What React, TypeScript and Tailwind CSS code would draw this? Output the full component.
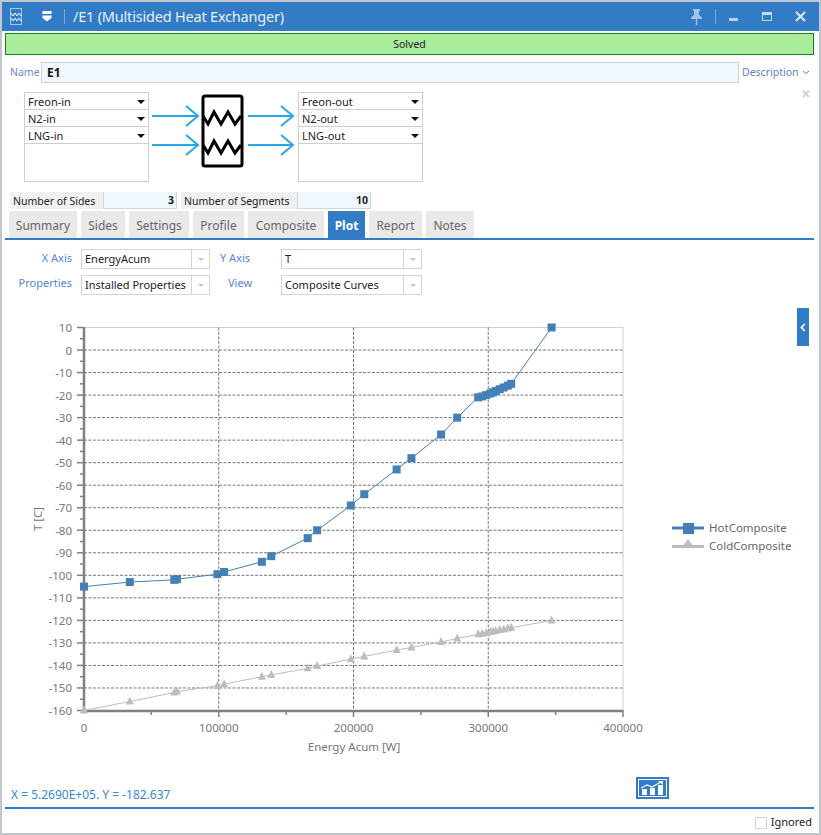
const hot: [number, number][] = [
  [0, -105], [34000, -103], [67000, -102], [69000, -101.7], [99000, -99.5], [104000, -98.5],
  [132000, -94], [139000, -91.5], [166000, -83.5], [173000, -80], [198000, -69], [208000, -64],
  [232000, -53], [243000, -48], [265000, -37.5], [277000, -30], [292500, -21], [295500, -20.6],
  [298500, -20], [301500, -19.3], [303500, -18.8], [305500, -18.2], [308500, -17.4], [311500, -16.6],
  [314500, -15.8], [317000, -15], [347000, 10],
];

const cold: [number, number][] = [
  [0, -160], [34000, -156], [67000, -152], [69000, -151.6], [99000, -149], [104000, -148.3],
  [132000, -145], [139000, -144.2], [166000, -141.3], [173000, -140.3], [198000, -137.2], [208000, -136],
  [232000, -133.2], [243000, -132], [265000, -129.6], [277000, -128], [292500, -126.2], [295500, -125.9],
  [298500, -125.6], [301500, -125.2], [303500, -124.9], [305500, -124.7], [308500, -124.3], [311500, -124],
  [314500, -123.6], [317000, -123.3], [347000, -120],
];

const px = (x: number) => 84 + (x / 400000) * 539;
const py = (y: number) => 327.5 + ((10 - y) / 170) * 383;
const line = (d: [number, number][]) => d.map((p) => `${px(p[0]).toFixed(1)},${py(p[1]).toFixed(1)}`).join(" ");

const yTicks = [10, 0, -10, -20, -30, -40, -50, -60, -70, -80, -90, -100, -110, -120, -130, -140, -150, -160];
const xTicks = [0, 100000, 200000, 300000, 400000];
const tabs = ["Summary", "Sides", "Settings", "Profile", "Composite", "Plot", "Report", "Notes"];
const tabWidths = ["w-[68px]", "w-[44px]", "w-[60px]", "w-[51px]", "w-[76px]", "w-[37px]", "w-[53px]", "w-[48px]"];

function Chart() {
  return (
    <svg className="block" width="817" height="465" viewBox="2 300 817 465" fontFamily="'Noto Sans', sans-serif">
      <line x1="84" x2="623" y1={327.5} y2={327.5} stroke="#cfcfcf" />
      <line x1="623" x2="623" y1={327.5} y2={710} stroke="#cfcfcf" />
      {yTicks.slice(1, -1).map((t) => (
        <line key={t} x1="84" x2="623" y1={py(t)} y2={py(t)} stroke="#777" strokeDasharray="3 1.5" />
      ))}
      {[100000, 200000, 300000].map((t) => (
        <line key={t} x1={px(t)} x2={px(t)} y1="327.5" y2="710" stroke="#777" strokeDasharray="3 1.5" />
      ))}
      {yTicks.map((t) => (
        <g key={t}>
          <line x1="77" x2="84" y1={py(t)} y2={py(t)} stroke="#808080" strokeWidth="1.5" />
          {t > -160 && <line x1="80" x2="84" y1={py(t - 5)} y2={py(t - 5)} stroke="#808080" strokeWidth="1.5" />}
          <text x="72" y={py(t) + 4.5} textAnchor="end" fontSize="11.5" fill="#777">{t}</text>
        </g>
      ))}
      {[50000, 100000, 150000, 200000, 250000, 300000, 350000, 400000].map((t) => (
        <line key={t} x1={px(t)} x2={px(t)} y1="710" y2={t % 100000 === 0 ? 717 : 715} stroke="#808080" strokeWidth="1.5" />
      ))}
      <line x1="84" x2="84" y1="327" y2="712" stroke="#808080" strokeWidth="2.5" />
      <line x1="83" x2="623" y1="711" y2="711" stroke="#808080" strokeWidth="2.5" />
      {xTicks.map((t) => (
        <text key={t} x={px(t)} y="732" textAnchor="middle" fontSize="11.5" fill="#777">{t}</text>
      ))}
      <text x="354" y="751" textAnchor="middle" fontSize="11.5" fill="#777">Energy Acum [W]</text>
      <text transform="translate(42 519) rotate(-90)" textAnchor="middle" fontSize="11.5" fill="#777">T [C]</text>

      <polyline points={line(cold)} fill="none" stroke="#bdbdbd" />
      {cold.map((p, i) => (
        <polygon
          key={i}
          transform={`translate(${px(p[0])} ${py(p[1])})`}
          points="0,-5 4,3 -4,3"
          fill="#bdbdbd"
        />
      ))}
      <polyline points={line(hot)} fill="none" stroke="#4480b5" />
      {hot.map((p, i) => (
        <rect key={i} x={px(p[0]) - 4} y={py(p[1]) - 4} width="8" height="8" fill="#4480b5" />
      ))}

      <line x1="672" x2="704" y1="528" y2="528" stroke="#4480b5" strokeWidth="3" />
      <rect x="683" y="523" width="11" height="11" fill="#4480b5" />
      <text x="709" y="532" fontSize="11.5" fill="#666">HotComposite</text>
      <line x1="672" x2="704" y1="546.5" y2="546.5" stroke="#bdbdbd" strokeWidth="3" />
      <polygon points="688,539 694,547 682,547" fill="#bdbdbd" />
      <text x="709" y="550" fontSize="11.5" fill="#666">ColdComposite</text>
    </svg>
  );
}

function StreamBox({ names }: { names: string[] }) {
  return (
    <div className="w-[125px] h-[90px] border border-[#cfcfcf] bg-white">
      {names.map((n) => (
        <div key={n} className="h-[17px] flex items-center justify-between pl-[3px] pr-[2px] pt-[2px] border-b border-[#cfcfcf] text-[11px] text-[#222]">
          <span>{n}</span>
          <span className="w-0 h-0 border-x-[4px] border-x-transparent border-t-[4px] border-t-[#111] mr-[1px]" />
        </div>
      ))}
    </div>
  );
}

function Diagram() {
  return (
    <svg width="149" height="90" viewBox="149 92 149 90" className="block shrink-0">
      <rect x="203" y="96" width="39" height="70" rx="2" fill="none" stroke="#000" strokeWidth="3" />
      <polyline points="203,116 208,124 214,112 221,124 228,112 235,124 241,116" fill="none" stroke="#000" strokeWidth="3" />
      <polyline points="203,145 208,153 214,141 221,153 228,141 235,153 241,145" fill="none" stroke="#000" strokeWidth="3" />
      {[116, 145].map((y) => (
        <g key={y} fill="none" stroke="#2aa7e2" strokeWidth="2">
          <line x1="152" x2="198" y1={y} y2={y} />
          <polyline points={`186,${y - 10} 198,${y} 186,${y + 10}`} />
          <line x1="248" x2="293" y1={y} y2={y} />
          <polyline points={`281,${y - 10} 293,${y} 281,${y + 10}`} />
        </g>
      ))}
    </svg>
  );
}

function Select({ value, width }: { value: string; width: string }) {
  return (
    <div className={`${width} h-[20px] border border-[#d4d4d4] flex items-center justify-between bg-white`}>
      <span className="pl-[3px] text-[11px] text-[#222] whitespace-nowrap">{value}</span>
      <span className="w-[18px] h-full shrink-0 border-l border-[#d4d4d4] flex items-center justify-center">
        <span className="w-0 h-0 border-x-[3px] border-x-transparent border-t-[3px] border-t-[#c4c4c4]" />
      </span>
    </div>
  );
}

export default function App() {
  return (
    <div
      className="relative w-[821px] h-[835px] bg-white border-x-[2px] border-t-[2px] border-b-[2px] border-[#c2c5c9] overflow-hidden flex flex-col"
      style={{ fontFamily: "'Noto Sans', sans-serif" }}
    >
      {/* title bar */}
      <div className="h-[29px] shrink-0 bg-[#327bc5] flex items-center text-white">
        <svg width="12" height="17" viewBox="0 0 12 17" className="ml-[8px] shrink-0">
          <rect x="0.5" y="0.5" width="11" height="16" fill="none" stroke="#a9c8e8" />
          <polyline points="1,5 3,8 5,5 7,8 9,5 11,8" fill="none" stroke="#fff" />
          <polyline points="1,10 3,13 5,10 7,13 9,10 11,13" fill="none" stroke="#fff" />
        </svg>
        <svg width="10" height="11" viewBox="0 0 10 11" className="ml-[20px] shrink-0">
          <rect x="0.5" y="0" width="9" height="3" fill="#fff" />
          <polygon points="0.5,4.5 9.5,4.5 9.5,7 5,10.5 0.5,7" fill="#fff" />
        </svg>
        <div className="ml-[12px] w-px h-[15px] bg-[#79a8d8]" />
        <div className="ml-[8px] text-[14.5px] tracking-[-0.2px] text-[#e8f0fa] whitespace-nowrap">/E1 (Multisided Heat Exchanger)</div>
        <svg width="13" height="16" viewBox="0 0 13 16" className="ml-auto shrink-0">
          <path d="M3 0h7v1.5l-1 .5v4l3 2.5V10H1V8.500l3-2.500V2L3 1.500zM5.800 10h1.400v6H5.800z" fill="#a3c4e6" />
        </svg>
        <div className="ml-[12px] w-px h-[15px] bg-[#79a8d8]" />
        <div className="ml-[13px] w-[9px] h-[3px] bg-[#b9d2ec] mt-[6px]" />
        <div className="ml-[24px] w-[10px] h-[9px] border border-t-[3px] border-[#c5daf0]" />
        <svg width="11" height="11" viewBox="0 0 11 11" className="ml-[23px] mr-[13px] shrink-0">
          <path d="M1 1l9 9M10 1l-9 9" stroke="#dbe8f6" strokeWidth="2" />
        </svg>
      </div>

      <div className="ml-[3px] mr-[5px] mt-[2px] h-[22px] pt-[2px] shrink-0 bg-[#a8ec9c] border border-[#1f7a1f] flex items-center justify-center text-[10.5px] text-[#222]">
        Solved
      </div>

      {/* name row */}
      <div className="mt-[7px] h-[21px] shrink-0 flex items-center">
        <span className="ml-[8px] w-[31px] text-[10.5px] text-[#6f86c9]">Name</span>
        <div className="w-[698px] h-[21px] bg-[#f0f7fd] border border-[#cfd2d6] pl-[5px] flex items-center text-[12px] font-bold text-[#111]">E1</div>
        <span className="ml-[3px] text-[10.5px] text-[#5f80c8]">Description</span>
        <svg width="8" height="5" viewBox="0 0 8 5" className="ml-[3px]">
          <path d="M1 1l3 2.500L7 1" fill="none" stroke="#5f80c8" />
        </svg>
      </div>

      {/* stream connections */}
      <div className="mt-[9px] h-[90px] shrink-0 flex">
        <div className="ml-[22px]" />
        <StreamBox names={["Freon-in", "N2-in", "LNG-in"]} />
        <Diagram />
        <StreamBox names={["Freon-out", "N2-out", "LNG-out"]} />
        <svg width="8" height="8" viewBox="0 0 8 8" className="ml-[379px] shrink-0 mt-[-2px]">
          <path d="M1 1l6 6M7 1l-6 6" stroke="#d2d2d2" strokeWidth="2" />
        </svg>
      </div>

      {/* counts */}
      <div className="mt-[10px] h-[17px] shrink-0 flex text-[10.5px] text-[#222] ml-[8px]">
        <div className="w-[94px] bg-[#f0f0f0] pl-[3px] pt-[2px] flex items-center border-r border-[#d4d4d4]">Number of Sides</div>
        <div className="w-[73px] bg-[#f0f7fd] pr-[2px] pt-[2px] flex items-center justify-end font-bold border-b border-r border-[#d4d4d4]">3</div>
        <div className="ml-[4px] w-[117px] bg-[#f0f0f0] pl-[3px] pt-[2px] flex items-center border-r border-[#d4d4d4]">Number of Segments</div>
        <div className="w-[73px] bg-[#f0f7fd] pr-[2px] pt-[2px] flex items-center justify-end font-bold border-b border-r border-[#d4d4d4]">10</div>
      </div>

      {/* tabs */}
      <div className="mt-[2px] ml-[3px] mr-[5px] h-[29px] shrink-0 flex gap-[4px] pl-[4px] border-b-2 border-[#327bc5]">
        {tabs.map((t, i) =>
          t === "Plot" ? (
            <div key={t} className={`${tabWidths[i]} h-[27px] pt-[2px] bg-[#327bc5] text-white font-bold text-[12px] flex items-center justify-center`}>{t}</div>
          ) : (
            <div key={t} className={`${tabWidths[i]} h-[27px] pt-[2px] bg-[#e9e9e9] text-[#666] text-[12px] flex items-center justify-center`}>{t}</div>
          ),
        )}
      </div>

      {/* axis selectors */}
      <div className="mt-[9px] h-[46px] shrink-0 grid grid-cols-[70px_129px_42px_141px] grid-rows-[20px_20px] gap-y-[6px] text-[11px] leading-[12px] text-[#5585d5] items-center">
        <span className="text-right mb-[2px]">X Axis</span>
        <div className="ml-[9px]"><Select value="EnergyAcum" width="w-[129px]" /></div>
        <span className="ml-[19px] whitespace-nowrap mb-[2px]">Y Axis</span>
        <div className="ml-[38px]"><Select value="T" width="w-[141px]" /></div>
        <span className="text-right mb-[5px]">Properties</span>
        <div className="ml-[9px]"><Select value="Installed Properties" width="w-[129px]" /></div>
        <span className="ml-[27px] mb-[5px]">View</span>
        <div className="ml-[38px]"><Select value="Composite Curves" width="w-[141px]" /></div>
      </div>

      <div className="mt-[5px] shrink-0">
        <Chart />
      </div>

      {/* status row */}
      <div className="h-[42px] shrink-0 flex items-end">
        <span className="ml-[9px] mb-[3px] text-[12px] text-[#3c87d4]">X = 5.2690E+05. Y = -182.637</span>
        <div className="absolute left-[634px] top-[775px] w-[33px] h-[22px] bg-[#327bc5] flex items-center justify-center">
          <svg width="29" height="18" viewBox="0 0 29 18">
            <rect x="0.5" y="0.5" width="28" height="17" fill="none" stroke="#fff" />
            <rect x="4" y="10" width="5" height="6" fill="#fff" />
            <rect x="12" y="9" width="5" height="7" fill="#fff" />
            <rect x="20" y="6" width="5" height="10" fill="#fff" />
            <path d="M3 9l6-3 5 2 9-5" fill="none" stroke="#fff" strokeWidth="1.300" />
            <path d="M20 2h5v4z" fill="#fff" />
          </svg>
        </div>
      </div>

      <div className="ml-[3px] mr-[5px] h-[2px] shrink-0 bg-[#327bc5]" />

      {/* footer */}
      <div className="flex-1 flex items-center justify-end pr-[7px] pt-[3px]">
        <span className="w-[12px] h-[12px] border border-[#d4d4d4] bg-white" />
        <span className="ml-[4px] text-[11px] text-[#222]">Ignored</span>
      </div>

      {/* side panel toggle */}
      <div className="absolute left-[795px] top-[306px] w-[12px] h-[38px] bg-[#327bc5] flex items-center justify-center">
        <svg width="6" height="9" viewBox="0 0 6 9">
          <path d="M4.800 1L1.500 4.500 4.800 8" fill="none" stroke="#fff" strokeWidth="1.800" />
        </svg>
      </div>
    </div>
  );
}
